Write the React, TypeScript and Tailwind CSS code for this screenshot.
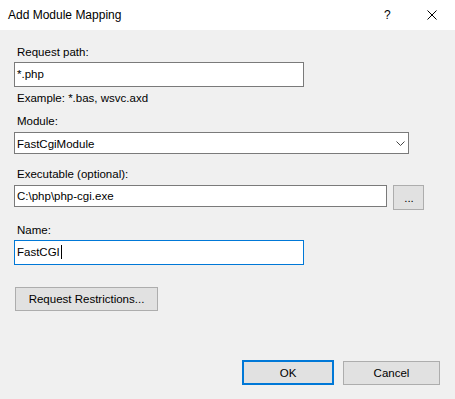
export default function App() {
  return (
    <div className="w-[455px] h-[399px] bg-[#f0f0f0] flex flex-col text-black font-['Liberation_Sans',Arial,sans-serif] overflow-hidden">
      <div className="h-[30px] bg-white flex items-center pl-[8px] pr-[18px] shrink-0">
        <span className="text-[12px] leading-[16px] flex-1">Add Module Mapping</span>
        <span className="text-[12px] leading-[16px] w-[6px]">?</span>
        <svg className="ml-[37px]" width="10" height="10" viewBox="0 0 10 10">
          <path d="M0.5 0.5 L9.5 9.5 M9.5 0.5 L0.5 9.5" stroke="#000" strokeWidth="1" fill="none" />
        </svg>
      </div>
      <div className="flex-1 flex flex-col pl-[14px] pr-[15px] pt-[14px] text-[11.5px] leading-[16px]">
        <div className="pl-[3px]">Request path:</div>
        <div className="mt-[2px] w-[290px] h-[25px] border border-[#7a7a7a] bg-white pl-[2px] flex items-center">
          <span className="pb-[2px]">*.php</span>
        </div>
        <div className="mt-[3px] pl-[3px]">Example: *.bas, wsvc.axd</div>
        <div className="mt-[7px] pl-[3px]">Module:</div>
        <div className="mt-[3px] w-[395px] h-[22px] border border-[#7a7a7a] bg-white pl-[2px] pr-[3px] flex items-center">
          <span className="flex-1 pt-[2px]">FastCgiModule</span>
          <svg width="9" height="5" viewBox="0 0 9 5">
            <path d="M0.5 0.5 L4.5 4.5 L8.5 0.5" stroke="#444" strokeWidth="1" fill="none" />
          </svg>
        </div>
        <div className="mt-[12px] pl-[3px]">Executable (optional):</div>
        <div className="mt-[3px] flex items-start">
          <div className="w-[373px] h-[22px] border border-[#7a7a7a] bg-white pl-[2px] flex items-center">
            <span>C:\php\php-cgi.exe</span>
          </div>
          <button className="ml-[6px] w-[31px] h-[25px] border border-[#adadad] bg-[#e1e1e1] flex items-center justify-center">
            <span className="pl-[1px]">...</span>
          </button>
        </div>
        <div className="mt-[12px] pl-[3px]">Name:</div>
        <div className="mt-[2px] w-[290px] h-[25px] border border-[#0078d7] bg-white pl-[2px] flex items-center">
          <span className="pb-[2px] flex items-center">
            FastCGI
            <span className="inline-block w-[1px] h-[14px] bg-black ml-[1px]" />
          </span>
        </div>
        <button className="mt-[22px] ml-[1px] w-[143px] h-[24px] border border-[#adadad] bg-[#e1e1e1] flex items-center justify-center">
          Request Restrictions...
        </button>
        <div className="mt-[49px] flex justify-end items-end">
          <button className="w-[92px] h-[25px] border-2 border-[#0078d7] bg-[#e1e1e1] flex items-center justify-center">
            OK
          </button>
          <button className="ml-[9px] w-[97px] h-[24px] border border-[#adadad] bg-[#e1e1e1] flex items-center justify-center">
            Cancel
          </button>
        </div>
      </div>
    </div>
  );
}
